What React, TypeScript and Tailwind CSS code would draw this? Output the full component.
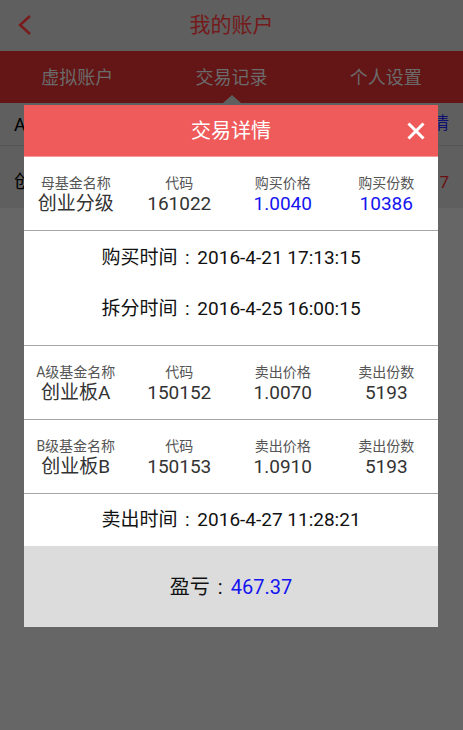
const font = { fontFamily: 'Roboto, "Noto Sans CJK SC", sans-serif' };

type Cell = { label: string; value: string; blue?: boolean };

// full-width colon drawn centred in its cell, like the Android font does
function Colon() {
  return <span className="inline-block w-[1.05em] text-center">:</span>;
}

function FundRow({ cells }: { cells: Cell[] }) {
  return (
    <div className="grid grid-cols-4 pt-[17px] pb-[14px] border-b border-[#a6a6a6]">
      {cells.map((c, i) => (
        <div key={i} className="flex flex-col items-center">
          <div className="text-[14px] leading-[18px] text-[#555]">{c.label}</div>
          <div className={`text-[19px] leading-[24px] ${c.blue ? 'text-[#1414f0]' : 'text-[#333]'}`}>
            {c.value}
          </div>
        </div>
      ))}
    </div>
  );
}

export default function App() {
  return (
    <div className="relative w-[463px] h-[730px] bg-[#666666] overflow-hidden" style={font}>
      {/* dimmed page behind the dialog */}
      <div className="h-[51px] bg-[#5f5f5f] flex items-center relative">
        <svg className="absolute left-[17px] top-[14px]" width="16" height="22" viewBox="0 0 16 22">
          <path d="M13 2 L3 11 L13 20" fill="none" stroke="#7a1a1a" strokeWidth="2.4" />
        </svg>
        <div className="w-full text-center text-[21px] text-[#741a1a]">我的账户</div>
      </div>
      <div className="h-[52px] bg-[#641616] grid grid-cols-3 items-center relative">
        <div className="text-center text-[18px] text-[#6b6b6b]">虚拟账户</div>
        <div className="text-center text-[18px] text-[#6b6b6b]">交易记录</div>
        <div className="text-center text-[18px] text-[#6b6b6b]">个人设置</div>
        <div className="absolute left-[223px] bottom-0 w-0 h-0 border-l-[9px] border-r-[9px] border-b-[8px] border-l-transparent border-r-transparent border-b-[#5f5f5f]" />
      </div>
      <div className="bg-[#5f5f5f]">
        <div className="h-[43px] flex items-center justify-between px-[14px] border-b border-[#555]">
          <span className="text-[18px] text-black">A级</span>
          <span className="text-[17px] text-[#101070]">详情</span>
        </div>
        <div className="h-[62px] flex items-start justify-between px-[14px] pt-[24px]">
          <span className="text-[18px] leading-[24px] text-black">创</span>
          <span className="text-[17px] leading-[24px] text-[#6a1010]">7</span>
        </div>
      </div>

      {/* dialog */}
      <div className="absolute left-[24px] top-[105px] w-[414px] bg-white">
        <div className="h-[52px] bg-[#ef5b5b] border-b border-[#f59a9a] relative flex items-center justify-center">
          <span className="text-[20px] text-white">交易详情</span>
          <svg className="absolute right-[13px] top-[17px]" width="18" height="18" viewBox="0 0 18 18">
            <path d="M1.5 1.5 L16.5 16.5 M16.5 1.5 L1.5 16.5" stroke="#ffffff" strokeWidth="3" />
          </svg>
        </div>
        <FundRow
          cells={[
            { label: '母基金名称', value: '创业分级' },
            { label: '代码', value: '161022' },
            { label: '购买价格', value: '1.0040', blue: true },
            { label: '购买份数', value: '10386', blue: true },
          ]}
        />
        <div className="flex flex-col items-center gap-[27px] pt-[15px] pb-[24px] border-b border-[#a6a6a6] text-[19px] leading-[24px] text-[#111]">
          <div>购买时间<Colon />2016-4-21 17:13:15</div>
          <div>拆分时间<Colon />2016-4-25 16:00:15</div>
        </div>
        <FundRow
          cells={[
            { label: 'A级基金名称', value: '创业板A' },
            { label: '代码', value: '150152' },
            { label: '卖出价格', value: '1.0070' },
            { label: '卖出份数', value: '5193' },
          ]}
        />
        <FundRow
          cells={[
            { label: 'B级基金名称', value: '创业板B' },
            { label: '代码', value: '150153' },
            { label: '卖出价格', value: '1.0910' },
            { label: '卖出份数', value: '5193' },
          ]}
        />
        <div className="h-[52px] flex items-center justify-center text-[19px] text-[#111]">
          <span>卖出时间<Colon />2016-4-27 11:28:21</span>
        </div>
        <div className="h-[81px] bg-[#dcdcdc] flex items-center justify-center text-[20px] text-[#111]">
          <span>盈亏<Colon /><span className="text-[#1414f0]">467.37</span></span>
        </div>
      </div>
    </div>
  );
}
